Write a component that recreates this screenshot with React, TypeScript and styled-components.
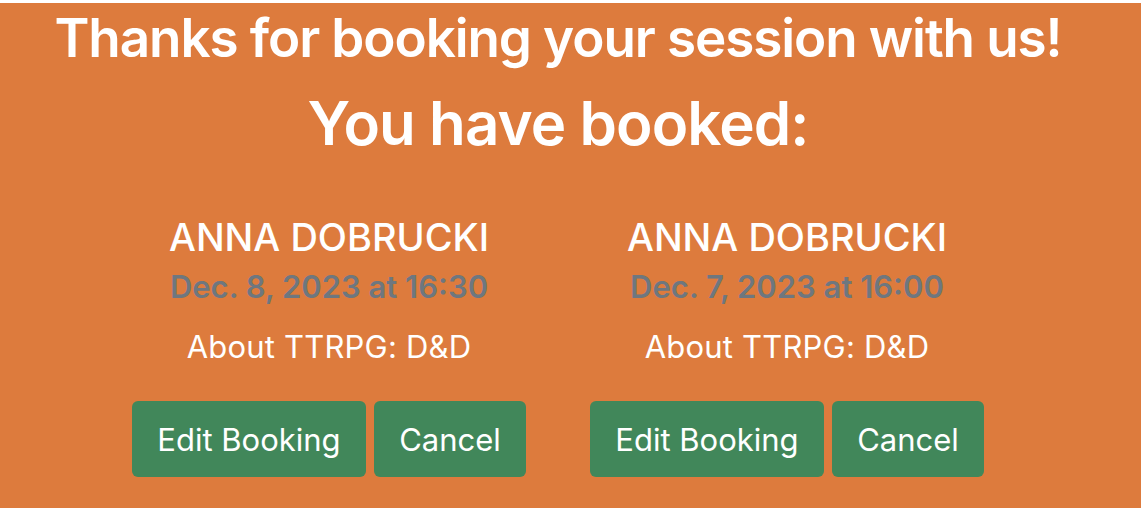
import React from "react";
import styled, { createGlobalStyle } from "styled-components";

const Global = createGlobalStyle`
  html, body { margin: 0; padding: 0; background: #ffffff; }
  body { font-family: Inter, "Noto Sans", sans-serif; }
`;

const Page = styled.main`
  margin-top: 3px;
  background: #dd7b3d;
  min-height: 505px;
  width: 1141px;
  padding-right: 25px;
  box-sizing: border-box;
  color: #ffffff;
  text-align: center;
  display: flex;
  flex-direction: column;
  align-items: center;
`;

const Title = styled.h1`
  margin: 3px 0 0;
  font-size: 53px;
  font-weight: 600;
  line-height: 64px;
  letter-spacing: -1.1px;
`;

const Subtitle = styled.h2`
  margin: 18px 0 0;
  font-size: 60px;
  font-weight: 600;
  line-height: 70px;
  letter-spacing: -0.9px;
`;

const Cards = styled.section`
  display: flex;
  justify-content: center;
  margin-top: 57px;
`;

const Card = styled.article`
  width: 458px;
  display: flex;
  flex-direction: column;
  align-items: center;
`;

const Name = styled.h3`
  margin: 0;
  font-size: 38px;
  font-weight: 500;
  line-height: 44px;
`;

const DateLine = styled.p`
  margin: 8px 0 0;
  font-size: 31px;
  font-weight: 600;
  line-height: 40px;
  color: #6e777f;
`;

const About = styled.p`
  margin: 20px 0 0;
  font-size: 31px;
  font-weight: 400;
  line-height: 40px;
  letter-spacing: 0.2px;
`;

const Actions = styled.div`
  display: flex;
  gap: 8px;
  margin-top: 34px;
`;

const Button = styled.button<{ $w: number }>`
  width: ${(p) => p.$w}px;
  height: 76px;
  border: none;
  border-radius: 6px;
  background: #41875a;
  color: #ffffff;
  font-family: inherit;
  font-size: 31px;
  font-weight: 400;
  padding: 0;
  cursor: pointer;
`;

const bookings = [
  { name: "ANNA DOBRUCKI", date: "Dec. 8, 2023 at 16:30", about: "About TTRPG: D&D" },
  { name: "ANNA DOBRUCKI", date: "Dec. 7, 2023 at 16:00", about: "About TTRPG: D&D" },
];

export default function App() {
  return (
    <>
      <Global />
      <Page>
        <Title>Thanks for booking your session with us!</Title>
        <Subtitle>You have booked:</Subtitle>
        <Cards>
          {bookings.map((b, i) => (
            <Card key={i}>
              <Name>{b.name}</Name>
              <DateLine>{b.date}</DateLine>
              <About>{b.about}</About>
              <Actions>
                <Button $w={234}>Edit Booking</Button>
                <Button $w={152}>Cancel</Button>
              </Actions>
            </Card>
          ))}
        </Cards>
      </Page>
    </>
  );
}
